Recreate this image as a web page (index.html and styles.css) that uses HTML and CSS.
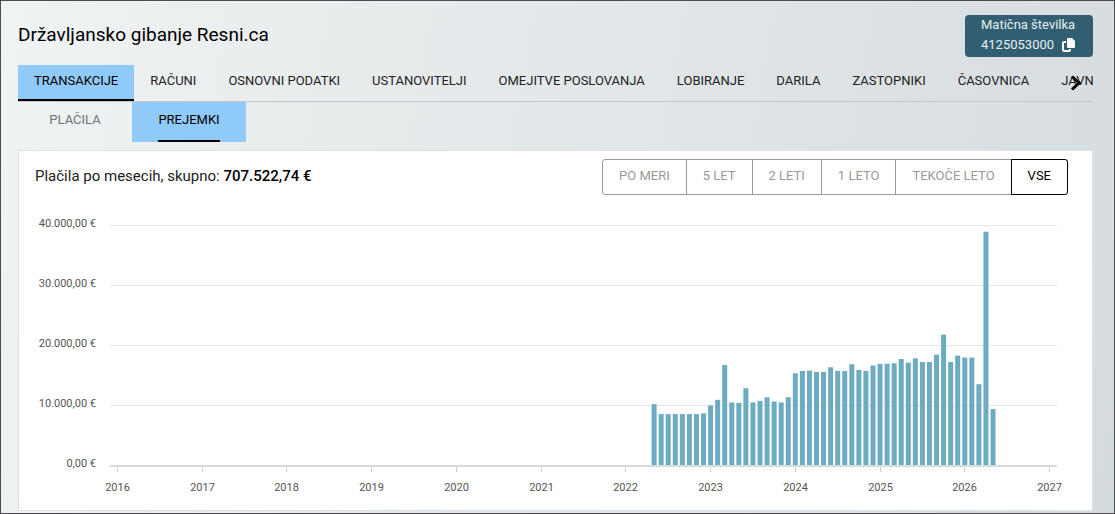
FILE: index.html
```html
<!DOCTYPE html>
<html lang="sl">
<head>
    <meta charset="UTF-8">
    <meta name="viewport" content="width=device-width, initial-scale=1.0">
    <title>Državljansko gibanje Resni.ca</title>
    <link rel="stylesheet" href="styles.css">
</head>
<body>
    <header class="page-header">
        <h1>Državljansko gibanje Resni.ca</h1>
        <button type="button" class="id-badge">
            <span>Matična številka</span>
            <span class="id-number">4125053000
                <svg width="13" height="14" viewBox="0 0 13 14" aria-hidden="true">
                    <path d="M6 0h4l3 3v6a1 1 0 0 1-1 1H6a1 1 0 0 1-1-1V1a1 1 0 0 1 1-1z" fill="#fff"/>
                    <path d="M4 4H2a1 1 0 0 0-1 1v7a1 1 0 0 0 1 1h5a1 1 0 0 0 1-1v-1" fill="none" stroke="#fff" stroke-width="2"/>
                </svg>
            </span>
        </button>
    </header>

    <div class="tabs-wrap">
        <nav class="tabs">
            <a href="#transakcije" class="active">TRANSAKCIJE</a>
            <a href="#racuni">RAČUNI</a>
            <a href="#podatki">OSNOVNI PODATKI</a>
            <a href="#ustanovitelji">USTANOVITELJI</a>
            <a href="#omejitve">OMEJITVE POSLOVANJA</a>
            <a href="#lobiranje">LOBIRANJE</a>
            <a href="#darila">DARILA</a>
            <a href="#zastopniki">ZASTOPNIKI</a>
            <a href="#casovnica">ČASOVNICA</a>
            <a href="#javna">JAVNA</a>
        </nav>
        <button type="button" class="tabs-next" aria-label="Naprej">
            <svg width="12" height="16" viewBox="0 0 12 16" aria-hidden="true">
                <path d="M2 1.5L9 8l-7 6.500" fill="none" stroke="#000" stroke-width="3"/>
            </svg>
        </button>
    </div>

    <nav class="subtabs">
        <a href="#placila"><span>PLAČILA</span></a>
        <a href="#prejemki" class="active"><span>PREJEMKI</span></a>
    </nav>

    <main class="card">
        <div class="card-header">
            <h2>Plačila po mesecih, skupno: <strong>707.522,74 €</strong></h2>
            <div class="ranges">
                <button type="button">PO MERI</button>
                <button type="button">5 LET</button>
                <button type="button">2 LETI</button>
                <button type="button">1 LETO</button>
                <button type="button">TEKOČE LETO</button>
                <button type="button" class="active">VSE</button>
            </div>
        </div>
        <svg id="chart" class="chart" role="img" aria-label="Plačila po mesecih"></svg>
    </main>

    <script src="chart.js"></script>
</body>
</html>
```
FILE: styles.css
```css
* {
    box-sizing: border-box;
}
body {
    margin: 0;
    min-height: 100vh;
    padding: 14px 21px 2px 17px;
    border: 1px solid #4b4d52;
    background: linear-gradient(100deg, #f0f3f4, #e1e6e8 55%, #d5dcdf);
    font-family: Roboto, sans-serif;
    font-size: 13px;
    color: #222;
}
button {
    font: inherit;
    cursor: pointer;
}
a {
    color: inherit;
    text-decoration: none;
}
.page-header {
    display: flex;
    justify-content: space-between;
    align-items: flex-start;
    height: 50px;
}
h1 {
    margin: 0;
    font-size: 19px;
    line-height: 40px;
    font-weight: normal;
    color: #000;
}
.id-badge {
    display: flex;
    flex-direction: column;
    width: 128px;
    height: 42px;
    padding: 0 0 0 16px;
    border: 0;
    border-radius: 4px;
    background: #315e70;
    color: #e6eff2;
    line-height: 20px;
    text-align: left;
    white-space: nowrap;
}
.id-number {
    display: flex;
    align-items: center;
    gap: 8px;
}
.tabs-wrap {
    position: relative;
}
.tabs {
    display: flex;
    overflow: hidden;
    border-bottom: 1px solid #c0c6c9;
}
.tabs a {
    flex: none;
    height: 36px;
    padding: 0 16px;
    line-height: 32px;
    white-space: nowrap;
}
.tabs .active {
    background: #90caf9;
    border-bottom: 2px solid #000;
    color: #000;
}
.tabs-next {
    position: absolute;
    top: 10px;
    right: 11px;
    padding: 0;
    border: 0;
    background: none;
    line-height: 0;
}
.subtabs {
    display: flex;
}
.subtabs a {
    width: 114px;
    height: 40px;
    text-align: center;
    color: #6d7376;
}
.subtabs span {
    display: inline-block;
    height: 40px;
    line-height: 36px;
}
.subtabs .active {
    background: #90caf9;
    color: #000;
}
.subtabs .active span {
    border-bottom: 2px solid #000;
}
.card {
    margin-top: 8px;
    padding: 8px 24px 0 16px;
    border: 1px solid #dde1e3;
    background: #fff;
}
.card-header {
    display: flex;
    justify-content: space-between;
}
h2 {
    margin: 0;
    font-size: 15px;
    line-height: 34px;
    font-weight: normal;
}
h2 strong {
    color: #000;
    font-weight: 500;
}
.ranges {
    display: flex;
}
.ranges button {
    height: 36px;
    padding: 0 16px 4px;
    margin-left: -1px;
    border: 1px solid #999;
    background: #fff;
    color: #999;
    white-space: nowrap;
}
.ranges button:first-child {
    border-radius: 3px 0 0 3px;
}
.ranges button:last-child {
    border-radius: 0 3px 3px 0;
}
.ranges .active {
    border-color: #000;
    color: #000;
}
.chart {
    display: block;
    width: 100%;
    height: 315px;
}
.chart text {
    font-size: 11px;
    fill: #555;
}
.chart .grid {
    stroke: #e6e6e6;
}
.chart .axis {
    stroke: #d8dbdd;
    stroke-width: 2;
}
.chart .tick {
    stroke: #ccd0d2;
}
.chart .bar {
    fill: #6cabc2;
}
```
FILE: chart.js
```js
// monthly totals, May 2022 - May 2026
const values = [
    10140, 8480, 8480, 8480, 8480, 8480, 8480, 8590,
    9920, 10860, 16680, 10420, 10360, 12800, 10420, 10690, 11300, 10580, 10420, 11300,
    15290, 15680, 15730, 15510, 15510, 16290, 15680, 15680, 16790, 15840, 15680, 16570,
    16840, 16900, 16950, 17670, 17060, 17780, 17170, 17170, 18390, 21720, 17170, 18230,
    17900, 17900, 13460, 38890, 9310
];
const firstYear = 2016;
const lastYear = 2027;
const firstMonth = (2022 - firstYear) * 12 + 4;
const chart = document.getElementById("chart");

function add(name, attrs, text) {
    const el = document.createElementNS("http://www.w3.org/2000/svg", name);
    for (const key in attrs) {
        el.setAttribute(key, attrs[key]);
    }
    if (text) {
        el.textContent = text;
    }
    chart.appendChild(el);
}

function draw() {
    chart.innerHTML = "";
    const left = 75;
    const right = chart.clientWidth - 11;
    const base = 270;
    const perThousand = 6;
    const month = (right - left - 15) / ((lastYear - firstYear) * 12);
    const start = left + 8;

    for (let v = 0; v <= 40; v += 10) {
        const y = base - v * perThousand;
        add("line", { class: v ? "grid" : "axis", x1: left, x2: right, y1: y + (v ? 0.5 : 1), y2: y + (v ? 0.5 : 1) });
        add("text", { x: left - 14, y: y + 2, "text-anchor": "end" }, (v ? v + ".000" : "0") + ",00 €");
    }
    for (let year = firstYear; year <= lastYear; year++) {
        const x = Math.round(start + (year - firstYear) * 12 * month) - 0.5;
        add("line", { class: "tick", x1: x, x2: x, y1: base + 2, y2: base + 7 });
        add("text", { x: x, y: base + 26, "text-anchor": "middle" }, String(year));
    }
    values.forEach((value, i) => {
        const h = value / 1000 * perThousand;
        const x = start + (firstMonth + i) * month;
        add("rect", { class: "bar", x: x - 3, y: base - h, width: 5, height: h });
    });
}

draw();
window.addEventListener("resize", draw);
```
